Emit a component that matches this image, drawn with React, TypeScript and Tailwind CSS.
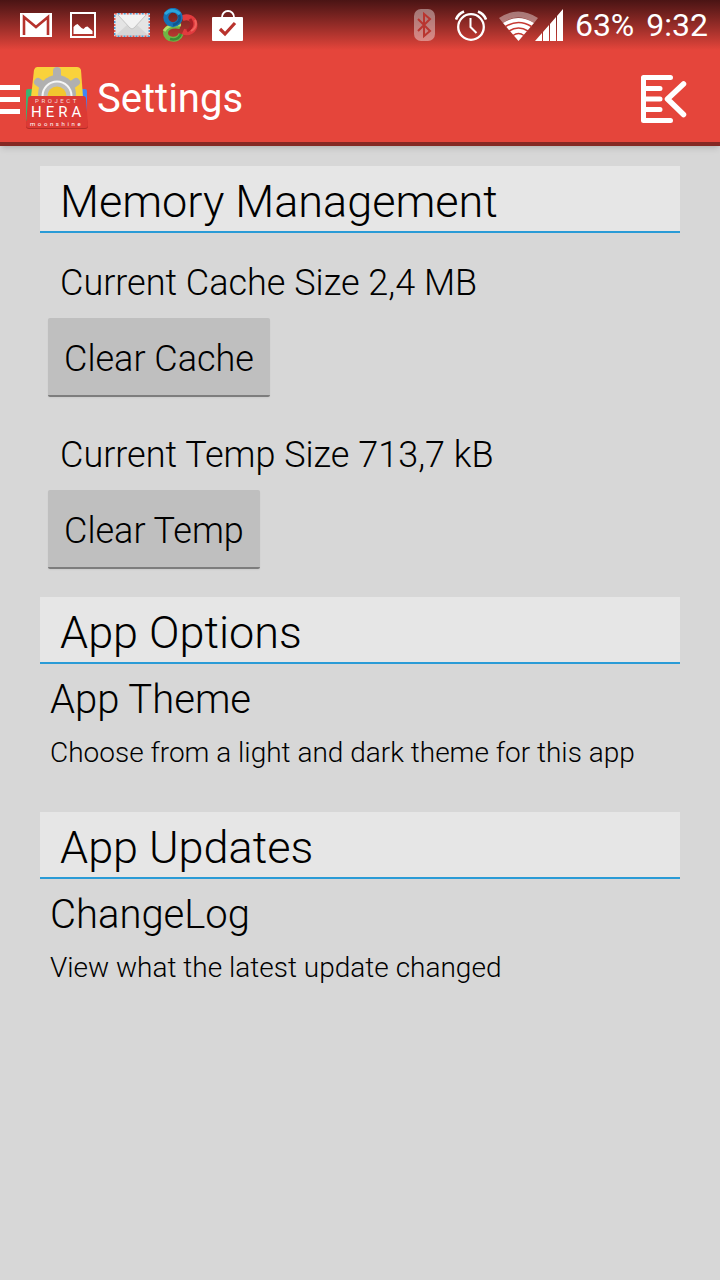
import React from 'react';

type StorageItemProps = {
    label: string;
    size: string;
    action: string;
};

type PreferenceProps = {
    title: string;
    summary: string;
};

type SectionProps = {
    title: string;
    children: React.ReactNode;
};

function GmailIcon() {
    return (
        <svg className="w-8 h-6" viewBox="0 0 32 24">
            <path fill="#fff" d="M0 0h32v24H0z" />
            <path
                fill="none"
                stroke="#b6322c"
                strokeWidth="2.6"
                d="M4 22V4l12 10L28 4v18"
            />
        </svg>
    );
}

function PictureIcon() {
    return (
        <svg className="w-[26px] h-[26px]" viewBox="0 0 26 26">
            <path
                fill="none"
                stroke="#fff"
                strokeWidth="2"
                d="M1 1h24v24H1z"
            />
            <path
                fill="#fff"
                d="M3.500 22v-7l2-2 2-1 4 4 2 1 2-2 2-.5 5 4.500v3z"
            />
        </svg>
    );
}

function MailIcon() {
    return (
        <svg className="w-9 h-6" viewBox="0 0 36 24">
            <path fill="#e4e4e4" d="M0 0h36v24H0z" />
            <path fill="#d6d6d6" d="M1 23l12-11 5 4 5-4 12 11z" />
            <path fill="#f2f2f2" d="M3 1h30L20 15q-2 2-4 0z" />
            <path
                fill="none"
                stroke="#c4c4c4"
                strokeWidth="1"
                d="M4 2l12 13q2 2 4 0L32 2"
            />
            <path
                fill="none"
                stroke="#e0584f"
                strokeWidth="1.5"
                strokeDasharray="2 4"
                d="M.7.7h34.6v22.6H.7z"
            />
            <path
                fill="none"
                stroke="#4a9bd4"
                strokeWidth="1.5"
                strokeDasharray="2 4"
                strokeDashoffset="3"
                d="M.7.7h34.6v22.6H.7z"
            />
        </svg>
    );
}

function RingsIcon() {
    return (
        <svg className="w-9 h-[34px]" viewBox="0 0 36 34" fill="none">
            <path
                stroke="#e23b3e"
                strokeWidth="6"
                d="M20 10.500a8 7.500 0 1 1 1 13"
            />
            <path stroke="#a81f26" strokeWidth="3" d="M28 11q5 7-3 12" />
            <path stroke="#f0625c" strokeWidth="2" d="M33 12q3 7-4 11" />
            <path
                stroke="#6fb544"
                strokeWidth="5"
                d="M18 18.500C9 17 3.500 20 3.500 25c0 7 13 9 15.500 1"
            />
            <path stroke="#b4dd66" strokeWidth="3" d="M2 23q4-7 17-6" />
            <path stroke="#3d8a35" strokeWidth="2.5" d="M8 31q8 2 11-5" />
            <circle
                cx="11"
                cy="9.500"
                r="7.2"
                stroke="#1672b5"
                strokeWidth="5"
            />
            <path stroke="#2ba5dc" strokeWidth="3" d="M3 6q7-7 15 0" />
            <path stroke="#0f558e" strokeWidth="2.5" d="M17 7q3 7-6 10" />
        </svg>
    );
}

function StoreIcon() {
    return (
        <svg className="w-8 h-[31px]" viewBox="0 0 32 31">
            <path
                fill="none"
                stroke="#fff"
                strokeWidth="1.8"
                d="M10 9V7a6 6 0 0 1 12 0v2"
            />
            <rect y="7" width="31" height="24" rx="1" fill="#fff" />
            <path
                fill="none"
                stroke="#b9332d"
                strokeWidth="3.2"
                d="M8 19l5 5L23 13"
            />
        </svg>
    );
}

function BluetoothIcon() {
    return (
        <svg className="w-[21px] h-8" viewBox="0 0 21 32">
            <rect width="21" height="32" rx="7" fill="#fff" opacity="0.4" />
            <path
                fill="none"
                stroke="#b9352f"
                strokeWidth="2"
                d="M4 10l12 12-6 5V5l6 5L4 22"
            />
        </svg>
    );
}

function AlarmIcon() {
    return (
        <svg
            className="w-8 h-[31px]"
            viewBox="0 0 32 31"
            fill="none"
            stroke="#fff"
        >
            <circle cx="16" cy="17" r="12.8" strokeWidth="2.3" />
            <path strokeWidth="2" d="M15.500 8v9l6 6" />
            <path strokeWidth="2.6" d="M1 9.500q2-5.500 8-8M31 9.500q-2-5.500-8-8" />
        </svg>
    );
}

function WifiIcon() {
    return (
        <svg className="w-10 h-[30px]" viewBox="0 0 40 30" fill="none">
            <path
                fill="#fff"
                opacity="0.4"
                d="M0 7Q19-6 39 7l-4 5Q19 1 4 12z"
            />
            <path fill="#fff" d="M4 12Q19 2 35 12L19.500 30z" />
            <path
                stroke="#c63932"
                strokeWidth="1.5"
                d="M6.500 15.500q13-8 26 0M10 20q9.500-6 19 0M14 24.500q5.500-4 11 0"
            />
        </svg>
    );
}

function SignalIcon() {
    return (
        <svg className="w-7 h-8" viewBox="0 0 28 32" fill="#fff">
            <path d="M0 32l7-8v8zM8 23l6-7v16H8zM15 15l6-7v24h-6zM22 7l6-7v32h-6z" />
        </svg>
    );
}

function MenuIcon() {
    return (
        <svg className="w-5 h-[29px]" viewBox="0 0 20 29" fill="#fff">
            <path d="M0 0h20v5H0zM0 12h20v5H0zM0 24h20v5H0z" />
        </svg>
    );
}

function AppLogo() {
    return (
        <svg className="w-16 h-16" viewBox="0 0 64 64">
            <path fill="#3cb371" d="M3 22h10v32H1V24q0-2 2-2z" />
            <path fill="#4285f4" d="M50 22h10q2 0 2 2v30H50z" />
            <path fill="#f9d23c" d="M12 0h40q3 0 4 3l2 27H6L9 3q1-3 3-3z" />
            <g fill="#b0b0b0" stroke="#b0b0b0" strokeLinecap="round">
                <path
                    strokeWidth="8"
                    d="M32 4v8M13 15l7 5M51 15l-7 5"
                />
                <circle cx="32" cy="27" r="19" stroke="none" />
            </g>
            <circle cx="32" cy="29" r="15.500" fill="#f6f6f6" />
            <circle cx="32" cy="29" r="13.5" fill="#bdbdbd" />
            <circle cx="32" cy="29" r="9.5" fill="#f2c62f" />
            <path
                fill="#b02c27"
                d="M5 31h54l4 28q0 3-3 3H4q-3 0-3-3z"
            />
            <path
                fill="#dc3a34"
                d="M6 29h52q3 0 3 3l2 26q0 3-3 3H4q-3 0-3-3l2-26q0-3 3-3z"
            />
            <g fill="#fff" fontFamily="Roboto, sans-serif">
                <text x="10" y="36" fontSize="6" letterSpacing="2.6" opacity="0.8">
                    PROJECT
                </text>
                <text x="6" y="50" fontSize="15" letterSpacing="4">
                    HERA
                </text>
                <text x="5" y="59" fontSize="6" letterSpacing="2.6">
                    moonshine
                </text>
            </g>
        </svg>
    );
}

function DrawerIcon() {
    return (
        <svg
            className="w-12 h-12"
            viewBox="0 0 48 48"
            fill="none"
            stroke="#fff"
            strokeWidth="5"
            strokeLinecap="round"
            strokeLinejoin="round"
        >
            <path d="M30.500 2.500h-27v43h27M4 13.500h16M4 24h16M4 34.500h16" />
            <path d="M43.500 9L27.500 24l16 15.500" strokeWidth="5.5" />
        </svg>
    );
}

function StatusBar() {
    return (
        <div className="flex items-center h-[50px] pl-5 pr-3 bg-linear-to-b from-[#4a1414] to-[#e5453b]">
            <div className="flex items-center gap-[18px]">
                <GmailIcon />
                <PictureIcon />
                <MailIcon />
                <div className="flex items-center gap-[14px] -ml-1.5">
                    <RingsIcon />
                    <StoreIcon />
                </div>
            </div>
            <div className="flex items-center ml-auto text-[32px] leading-10">
                <BluetoothIcon />
                <div className="flex items-center ml-5 mr-3">
                    <AlarmIcon />
                    <div className="flex items-end ml-3">
                        <WifiIcon />
                        <div className="-ml-1">
                            <SignalIcon />
                        </div>
                    </div>
                </div>
                <span className="mr-3">63%</span>
                <span>9:32</span>
            </div>
        </div>
    );
}

function Header() {
    return (
        <header className="text-white bg-[#e5453b] border-b-4 border-[#842823] shadow-md">
            <StatusBar />
            <div className="flex items-center h-[92px] pt-1.5 pr-8">
                <button
                    type="button"
                    aria-label="Open menu"
                    className="flex items-center gap-[5px]"
                >
                    <MenuIcon />
                    <AppLogo />
                </button>
                <h1 className="ml-2 text-[40px] leading-12">Settings</h1>
                <button type="button" aria-label="Drawer" className="ml-auto">
                    <DrawerIcon />
                </button>
            </div>
        </header>
    );
}

function Section(props: SectionProps) {
    return (
        <section>
            <h2 className="px-5 pt-2.5 pb-[3px] text-[45px] leading-[52px] bg-[#e6e6e6] border-b-2 border-[#2a9bd6]">
                {props.title}
            </h2>
            {props.children}
        </section>
    );
}

function StorageItem(props: StorageItemProps) {
    return (
        <div className="pl-2">
            <p className="pl-3 mb-[13px] text-4xl leading-[44px]">
                {props.label} {props.size}
            </p>
            <button
                type="button"
                className="px-4 pt-1 h-[79px] text-4xl rounded-xs bg-[#bfbfbf] border-b-2 border-[#7d7d7d] shadow-xs"
            >
                {props.action}
            </button>
        </div>
    );
}

function Preference(props: PreferenceProps) {
    return (
        <a href="#" className="block px-2.5 pt-3 pb-[43px]">
            <span className="block text-[40px] leading-12">{props.title}</span>
            <span className="block mt-[13px] text-[28px] leading-8">
                {props.summary}
            </span>
        </a>
    );
}

export default function App() {
    return (
        <div className="min-h-screen bg-[#d7d7d7] text-black font-[Roboto,sans-serif]">
            <Header />
            <main className="px-10 pt-5 font-light">
                <Section title="Memory Management">
                    <div className="flex flex-col gap-9 pt-7 pb-7">
                        <StorageItem
                            label="Current Cache Size"
                            size="2,4 MB"
                            action="Clear Cache"
                        />
                        <StorageItem
                            label="Current Temp Size"
                            size="713,7 kB"
                            action="Clear Temp"
                        />
                    </div>
                </Section>
                <Section title="App Options">
                    <Preference
                        title="App Theme"
                        summary="Choose from a light and dark theme for this app"
                    />
                </Section>
                <Section title="App Updates">
                    <Preference
                        title="ChangeLog"
                        summary="View what the latest update changed"
                    />
                </Section>
            </main>
        </div>
    );
}
